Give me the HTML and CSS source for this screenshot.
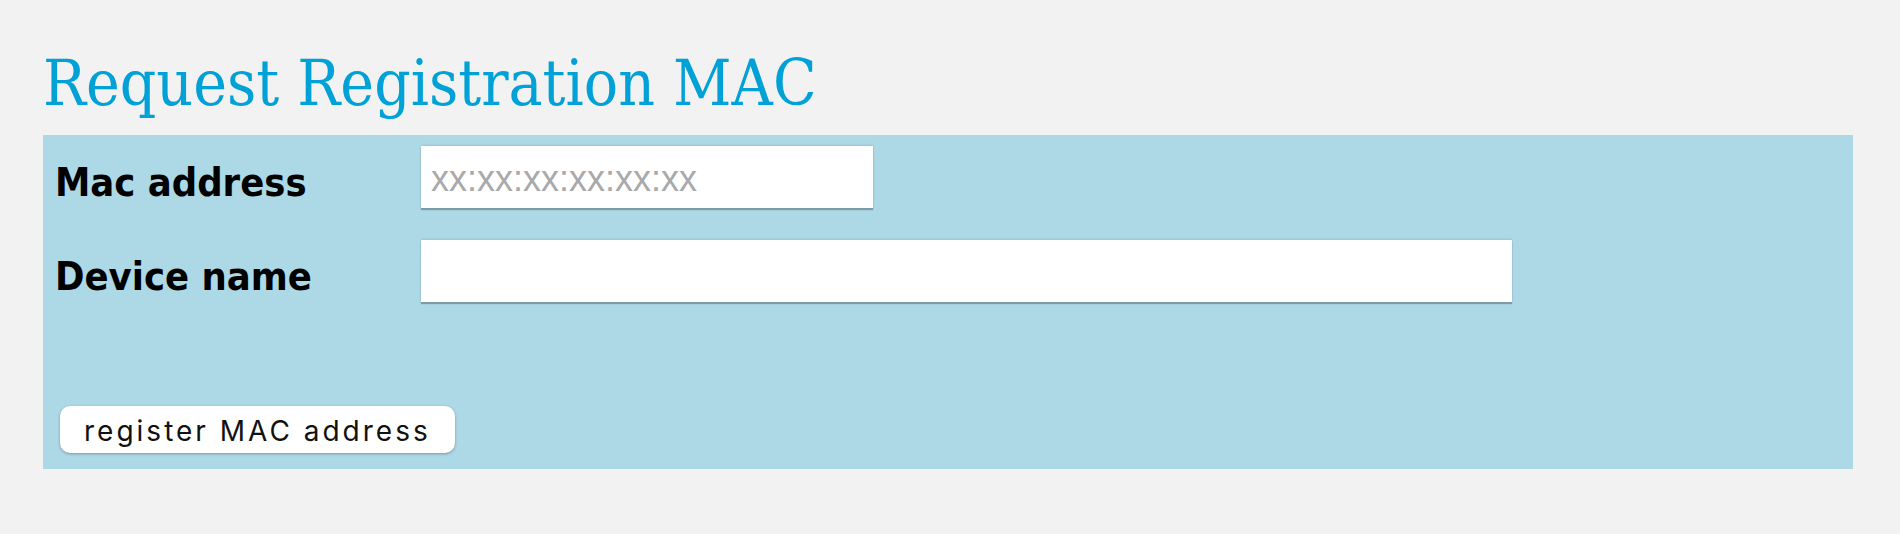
FILE: index.html
```
<!DOCTYPE html>
<html lang="en">
<head>
<meta charset="utf-8">
<title>Request Registration MAC</title>
<link rel="stylesheet" href="styles.css">
</head>
<body>
<div class="page">
  <h1 class="title">Request Registration MAC</h1>
  <form class="panel">
    <div class="fields">
      <label class="label" for="mac">Mac address</label>
      <input class="field field-mac" id="mac" type="text" placeholder="xx:xx:xx:xx:xx:xx">
      <label class="label" for="dev">Device name</label>
      <input class="field field-dev" id="dev" type="text">
    </div>
    <button class="submit" type="button">register MAC address</button>
  </form>
</div>
</body>
</html>
```
FILE: styles.css
```
html, body {
  margin: 0;
  padding: 0;
  background: #f2f2f2;
}
.page {
  padding: 43px 47px 0 43px;
}
.title {
  margin: 0 0 12px 0;
  font-family: "DejaVu Serif Condensed", "DejaVu Serif", serif;
  font-stretch: condensed;
  font-weight: normal;
  font-size: 63.5px;
  line-height: 80px;
  color: #00a1d6;
}
.panel {
  background: #add8e6;
  padding: 11px 0 16px 12px;
  display: flex;
  flex-direction: column;
  align-items: flex-start;
}
.fields {
  display: grid;
  grid-template-columns: 366px auto;
  row-gap: 32px;
  align-items: start;
}
.label {
  font-family: "DejaVu Sans Condensed", "DejaVu Sans", sans-serif;
  font-stretch: condensed;
  font-weight: bold;
  font-size: 39.5px;
  line-height: 52px;
  padding-top: 10px;
  color: #000;
}
.field {
  height: 62px;
  box-sizing: border-box;
  border: 0;
  margin: 0;
  padding: 4px 10px 0 10px;
  background: #fff;
  font-family: "Liberation Sans", Arial, sans-serif;
  font-size: 36px;
  color: #222;
  outline: none;
  box-shadow: 0 -1px 2px rgba(0, 60, 90, 0.12), 0 2px 1px rgba(0, 0, 0, 0.28);
}
.field::placeholder {
  color: #a9a9a9;
}
.field-mac {
  width: 452px;
}
.field-dev {
  width: 1091px;
}
.submit {
  margin: 104px 0 0 5px;
  height: 47px;
  padding: 3px 24px 0 24px;
  border: 0;
  border-radius: 10px;
  background: #fff;
  box-shadow: 0 1px 3px rgba(0, 0, 0, 0.3);
  font-family: "Inter", "Open Sans", sans-serif;
  font-size: 28px;
  letter-spacing: 3px;
  color: #111;
}
```
